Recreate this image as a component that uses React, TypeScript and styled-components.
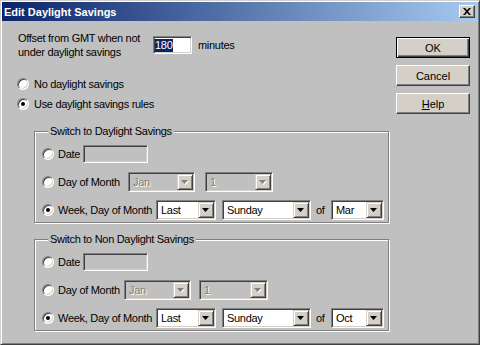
import styled, { createGlobalStyle } from "styled-components";

const GlobalStyle = createGlobalStyle`
  html, body {
    margin: 0;
    padding: 0;
    background: #c0c0c0;
  }
  * {
    box-sizing: border-box;
  }
`;

const Window = styled.div`
  width: 480px;
  height: 345px;
  padding: 1px;
  background: #c0c0c0;
  border: 1px solid;
  border-color: #d4d0c8 #404040 #404040 #d4d0c8;
  box-shadow: inset 1px 1px 0 #fff, inset -1px -1px 0 #808080;
  display: flex;
  flex-direction: column;
  font-family: "Liberation Sans", Arial, sans-serif;
  font-size: 11px;
  letter-spacing: -0.3px;
  color: #000;
`;

const TitleBar = styled.div`
  height: 19px;
  flex: none;
  display: flex;
  align-items: center;
  justify-content: space-between;
  padding: 0 3px 0 2px;
  background: linear-gradient(90deg, #0a246a, #a6caf0);
`;

const Title = styled.span`
  color: #fff;
  font-weight: bold;
  font-size: 11px;
  letter-spacing: 0;
`;

const CloseButton = styled.div`
  width: 16px;
  height: 13px;
  background: #d4d0c8;
  border: 1px solid;
  border-color: #fff #404040 #404040 #fff;
  box-shadow: inset -1px -1px 0 #808080;
  display: grid;
  place-items: center;
`;

const Body = styled.div`
  flex: 1;
  display: grid;
  grid-template-columns: 1fr 74px;
  column-gap: 7px;
  padding: 0 8px 0 15px;
`;

const Main = styled.div`
  display: flex;
  flex-direction: column;
`;

const OffsetRow = styled.div`
  margin-top: 10px;
  display: flex;
  align-items: center;
`;

const OffsetLabel = styled.div`
  width: 136px;
  padding-left: 1px;
  line-height: 14px;
`;

const Sunken = styled.div<{ $width: number; $height: number; $disabled?: boolean }>`
  width: ${(p) => p.$width}px;
  height: ${(p) => p.$height}px;
  flex: none;
  background: ${(p) => (p.$disabled ? "#c0c0c0" : "#fff")};
  border: 1px solid;
  border-color: #808080 #fff #fff #808080;
  box-shadow: inset 1px 1px 0 #404040, inset -1px -1px 0 #d4d0c8;
  display: flex;
  align-items: center;
  padding: 1px;
`;

const Selected = styled.span`
  background: #0a246a;
  color: #fff;
  line-height: 13px;
  padding: 0 1px 0 0;
`;

const Units = styled.span`
  margin-left: 6px;
`;

const RadioRow = styled.div`
  height: 20px;
  display: flex;
  align-items: center;
  white-space: nowrap;
`;

const RadioDot = styled.span<{ $checked?: boolean; $gap?: number }>`
  width: 12px;
  height: 12px;
  flex: none;
  margin-right: ${(p) => p.$gap ?? 5}px;
  border-radius: 50%;
  background: #fff;
  border: 1px solid;
  border-color: #808080 #fff #fff #808080;
  box-shadow: inset 1px 1px 0 #404040, inset -1px -1px 0 #d4d0c8;
  display: grid;
  place-items: center;

  &::after {
    content: "";
    width: 4px;
    height: 4px;
    border-radius: 50%;
    background: ${(p) => (p.$checked ? "#000" : "transparent")};
  }
`;

const TopRadios = styled.div`
  margin-top: 15px;
  display: flex;
  flex-direction: column;
`;

const Group = styled.fieldset<{ $top: number }>`
  margin: ${(p) => p.$top}px 0 0 17px;
  padding: 6px 0 2px 7px;
  border: 1px solid #808080;
  box-shadow: inset 1px 1px 0 #fff, 1px 1px 0 #fff;
  display: flex;
  flex-direction: column;
  gap: 8px;
  min-inline-size: 0;
`;

const Legend = styled.legend`
  margin-left: 6px;
  padding: 0 2px;
  line-height: 14px;
  background: #c0c0c0;
`;

const RowLabel = styled.span<{ $width: number }>`
  width: ${(p) => p.$width}px;
  flex: none;
  white-space: nowrap;
`;

const ComboBox = styled.div<{ $width: number; $disabled?: boolean; $gap?: number }>`
  width: ${(p) => p.$width}px;
  height: 20px;
  flex: none;
  margin-left: ${(p) => p.$gap ?? 0}px;
  background: ${(p) => (p.$disabled ? "#c0c0c0" : "#fff")};
  border: 1px solid;
  border-color: #808080 #fff #fff #808080;
  box-shadow: inset 1px 1px 0 #404040, inset -1px -1px 0 #d4d0c8;
  padding: 1px;
  display: flex;
  align-items: center;
`;

const ComboText = styled.span<{ $disabled?: boolean }>`
  flex: 1;
  padding-left: 3px;
  color: ${(p) => (p.$disabled ? "#808080" : "#000")};
  text-shadow: ${(p) => (p.$disabled ? "1px 1px 0 #fff" : "none")};
`;

const DropButton = styled.span`
  width: 16px;
  height: 16px;
  flex: none;
  background: #d4d0c8;
  border: 1px solid;
  border-color: #d4d0c8 #404040 #404040 #d4d0c8;
  box-shadow: inset 1px 1px 0 #fff, inset -1px -1px 0 #808080;
  display: grid;
  place-items: center;
`;

const OfText = styled.span`
  width: 15px;
  flex: none;
  margin-left: 5px;
`;

const Buttons = styled.div`
  margin-top: 16px;
  display: flex;
  flex-direction: column;
  gap: 7px;
`;

const PushButton = styled.div<{ $default?: boolean }>`
  height: 21px;
  background: #d4d0c8;
  display: grid;
  place-items: center;
  border: 1px solid;
  border-color: ${(p) => (p.$default ? "#000" : "#fff #404040 #404040 #fff")};
  box-shadow: ${(p) =>
    p.$default
      ? "inset 1px 1px 0 #fff, inset -1px -1px 0 #404040, inset -2px -2px 0 #808080"
      : "inset -1px -1px 0 #808080"};
  letter-spacing: 0;
`;

const Arrow = ({ disabled }: { disabled?: boolean }) => (
  <svg width="8" height="5" viewBox="0 0 8 5">
    {disabled && <polygon points="1,1 8,1 4.5,5" fill="#fff" />}
    <polygon points="0,0 7,0 3.5,4" fill={disabled ? "#808080" : "#000"} />
  </svg>
);

type ComboProps = { width: number; value: string; disabled?: boolean; gap?: number };

const Combo = ({ width, value, disabled, gap }: ComboProps) => (
  <ComboBox $width={width} $disabled={disabled} $gap={gap}>
    <ComboText $disabled={disabled}>{value}</ComboText>
    <DropButton>
      <Arrow disabled={disabled} />
    </DropButton>
  </ComboBox>
);

type SwitchProps = {
  title: string;
  top: number;
  dayLabel: number;
  janWidth: number;
  oneGap: number;
  oneWidth: number;
  month: string;
};

const SwitchGroup = ({ title, top, dayLabel, janWidth, oneGap, oneWidth, month }: SwitchProps) => (
  <Group $top={top}>
    <Legend>{title}</Legend>
    <RadioRow>
      <RadioDot $gap={4} />
      <RowLabel $width={25}>Date</RowLabel>
      <Sunken $width={65} $height={18} $disabled />
    </RadioRow>
    <RadioRow>
      <RadioDot $gap={4} />
      <RowLabel $width={dayLabel}>Day of Month</RowLabel>
      <Combo width={janWidth} value="Jan" disabled />
      <Combo width={oneWidth} value="1" disabled gap={oneGap} />
    </RadioRow>
    <RadioRow>
      <RadioDot $gap={4} $checked />
      <RowLabel $width={98}>Week, Day of Month</RowLabel>
      <Combo width={60} value="Last" />
      <Combo width={89} value="Sunday" gap={6} />
      <OfText>of</OfText>
      <Combo width={53} value={month} />
    </RadioRow>
  </Group>
);

const App = () => {
  return (
    <>
      <GlobalStyle />
      <Window>
        <TitleBar>
          <Title>Edit Daylight Savings</Title>
          <CloseButton>
            <svg width="8" height="7" viewBox="0 0 8 7">
              <path d="M0 0h2l2 2.2L6 0h2L5 3.5 8 7H6L4 4.8 2 7H0l3-3.5z" fill="#000" />
            </svg>
          </CloseButton>
        </TitleBar>
        <Body>
          <Main>
            <OffsetRow>
              <OffsetLabel>
                Offset from GMT when not
                <br />
                under daylight savings
              </OffsetLabel>
              <Sunken $width={39} $height={18}>
                <Selected>180</Selected>
              </Sunken>
              <Units>minutes</Units>
            </OffsetRow>
            <TopRadios>
              <RadioRow>
                <RadioDot />
                No daylight savings
              </RadioRow>
              <RadioRow>
                <RadioDot $checked />
                Use daylight savings rules
              </RadioRow>
            </TopRadios>
            <SwitchGroup
              title="Switch to Daylight Savings"
              top={10}
              dayLabel={70}
              janWidth={67}
              oneGap={10}
              oneWidth={68}
              month="Mar"
            />
            <SwitchGroup
              title="Switch to Non Daylight Savings"
              top={9}
              dayLabel={66}
              janWidth={67}
              oneGap={8}
              oneWidth={69}
              month="Oct"
            />
          </Main>
          <Buttons>
            <PushButton $default>OK</PushButton>
            <PushButton>Cancel</PushButton>
            <PushButton>
              <span>
                <u>H</u>elp
              </span>
            </PushButton>
          </Buttons>
        </Body>
      </Window>
    </>
  );
};

export default App;
